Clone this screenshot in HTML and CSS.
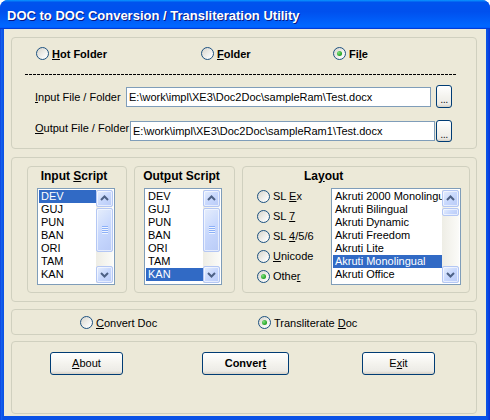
FILE: index.html
```html
<!DOCTYPE html>
<html lang="en">
  <head>
    <meta charset="UTF-8" />
    <title>DOC to DOC Conversion / Transliteration Utility</title>
    <link rel="stylesheet" href="styles.css">
  </head>
  <body>
    <div class="window">
      <div class="titlebar">DOC to DOC Conversion / Transliteration Utility</div>
      <div class="client">
        <div class="group source">
          <div class="mode-row">
            <div class="option hot"><span class="radio"></span><b><u>H</u>ot Folder</b></div>
            <div class="option folder"><span class="radio"></span><b><u>F</u>older</b></div>
            <div class="option"><span class="radio checked"></span><b>Fi<u>l</u>e</b></div>
          </div>
          <div class="dashes"></div>
          <div class="path-row input">
            <span class="path-label"><u>I</u>nput File / Folder</span>
            <div class="textbox">E:\work\impl\XE3\Doc2Doc\sampleRam\Test.docx</div>
            <div class="btn browse">...</div>
          </div>
          <div class="path-row output">
            <span class="path-label"><u>O</u>utput File / Folder</span>
            <div class="textbox">E:\work\impl\XE3\Doc2Doc\sampleRam1\Test.docx</div>
            <div class="btn browse">...</div>
          </div>
        </div>

        <div class="group scripts">
          <div class="subgroup script input-script">
            <div class="subtitle">Input <u>S</u>cript</div>
            <div class="listbox">
              <ul class="items">
                <li class="sel">DEV</li>
                <li>GUJ</li>
                <li>PUN</li>
                <li>BAN</li>
                <li>ORI</li>
                <li>TAM</li>
                <li>KAN</li>
              </ul>
              <div class="scrollbar">
                <div class="sb-btn"><svg width="15" height="15" viewBox="0 0 15 15"><path d="M4 9 L7.5 5.5 L11 9" /></svg></div>
                <div class="sb-track"><div class="sb-thumb tall"><span class="grip"></span></div></div>
                <div class="sb-btn"><svg width="15" height="15" viewBox="0 0 15 15"><path d="M4 6 L7.5 9.5 L11 6" /></svg></div>
              </div>
            </div>
          </div>
          <div class="subgroup script output-script">
            <div class="subtitle">Out<u>p</u>ut Script</div>
            <div class="listbox">
              <ul class="items">
                <li>DEV</li>
                <li>GUJ</li>
                <li>PUN</li>
                <li>BAN</li>
                <li>ORI</li>
                <li>TAM</li>
                <li class="sel">KAN</li>
              </ul>
              <div class="scrollbar">
                <div class="sb-btn"><svg width="15" height="15" viewBox="0 0 15 15"><path d="M4 9 L7.5 5.5 L11 9" /></svg></div>
                <div class="sb-track"><div class="sb-thumb tall"><span class="grip"></span></div></div>
                <div class="sb-btn"><svg width="15" height="15" viewBox="0 0 15 15"><path d="M4 6 L7.5 9.5 L11 6" /></svg></div>
              </div>
            </div>
          </div>
          <div class="subgroup layout">
            <div class="subtitle">La<u>y</u>out</div>
            <div class="layout-body">
              <div class="radio-col">
                <div class="option"><span class="radio"></span><span>SL <u>E</u>x</span></div>
                <div class="option"><span class="radio"></span><span>SL <u>7</u></span></div>
                <div class="option"><span class="radio"></span><span>SL <u>4</u>/5/6</span></div>
                <div class="option"><span class="radio"></span><span><u>U</u>nicode</span></div>
                <div class="option"><span class="radio checked"></span><span>Othe<u>r</u></span></div>
              </div>
              <div class="listbox wide">
                <ul class="items">
                  <li>Akruti 2000 Monolingual</li>
                  <li>Akruti Bilingual</li>
                  <li>Akruti Dynamic</li>
                  <li>Akruti Freedom</li>
                  <li>Akruti Lite</li>
                  <li class="sel">Akruti Monolingual</li>
                  <li>Akruti Office</li>
                </ul>
                <div class="scrollbar">
                  <div class="sb-btn"><svg width="15" height="15" viewBox="0 0 15 15"><path d="M4 9 L7.5 5.5 L11 9" /></svg></div>
                  <div class="sb-track"><div class="sb-thumb small"></div></div>
                  <div class="sb-btn"><svg width="15" height="15" viewBox="0 0 15 15"><path d="M4 6 L7.5 9.5 L11 6" /></svg></div>
                </div>
              </div>
            </div>
          </div>
        </div>

        <div class="group action">
          <div class="option convert-doc"><span class="radio"></span><span><u>C</u>onvert Doc</span></div>
          <div class="option"><span class="radio checked"></span><span>Transliterate <u>D</u>oc</span></div>
        </div>

        <div class="group buttons">
          <div class="btn push about"><u>A</u>bout</div>
          <div class="btn push convert">Conver<u>t</u></div>
          <div class="btn push exit">E<u>x</u>it</div>
        </div>
      </div>
    </div>
  </body>
</html>
```

FILE: styles.css
```css
body {
  margin: 0px;
  background-color: rgb(255, 255, 255);
  font-family: 'Liberation Sans', Arial, sans-serif;
  font-size: 11px;
  color: rgb(0, 0, 0);
}

u {
  text-decoration-thickness: 1px;
  text-underline-offset: 1px;
}

.window {
  width: 490px;
  height: 420px;
  box-sizing: border-box;
  display: flex;
  flex-direction: column;
  border-radius: 8px 8px 0px 0px;
  overflow: hidden;
  background: linear-gradient(90deg, #0831d9 0px, #1664ee 1px, #0a52e6 3px, #0a52e6 calc(100% - 3px), #0831d9 100%);
}

.titlebar {
  flex: none;
  height: 29px;
  padding-left: 7px;
  line-height: 31px;
  color: white;
  font-weight: bold;
  font-size: 13px;
  text-shadow: 1px 1px #0a1883;
  background: linear-gradient(#0997ff, #0053ee 8%, #0050ee 40%, #0066ff 88%, #0066ff 93%, #005bff 95%, #003dd7 96%, #003dd7);
}

.client {
  flex: 1;
  margin: 0px 4px 4px;
  padding: 8px 0px 0px 7px;
  background-color: #ece9d8;
}

.group,
.subgroup {
  box-sizing: border-box;
  border: 1px solid #d0d0bf;
  border-radius: 4px;
}

.group {
  width: 466px;
}

/* radios */

.option {
  display: flex;
  align-items: center;
  gap: 3px;
  white-space: nowrap;
}

.radio {
  flex: none;
  width: 13px;
  height: 13px;
  box-sizing: border-box;
  border: 1px solid #1c5180;
  border-radius: 50%;
  background: linear-gradient(135deg, #d7d5cc, #f6f6f4 70%, #ffffff);
  display: grid;
  place-items: center;
}

.radio.checked::after {
  content: '';
  width: 5px;
  height: 5px;
  border-radius: 50%;
  background: radial-gradient(circle at 35% 35%, #7fe07f, #21a121 70%);
}

/* top group */

.source {
  height: 112px;
}

.mode-row {
  display: flex;
  height: 15px;
  padding: 8px 0px 0px 24px;
}

.mode-row .hot {
  width: 165px;
}

.mode-row .folder {
  width: 132px;
}

.dashes {
  width: 431px;
  height: 1px;
  margin: 13px 0px 0px 13px;
  background: repeating-linear-gradient(90deg, #000 0px 3px, transparent 3px 4px);
}

.path-row {
  display: flex;
  align-items: center;
  padding-left: 23px;
  height: 23px;
  margin-top: 10px;
}

.path-label {
  flex: none;
  line-height: 14px;
}

.input .path-label {
  width: 91px;
}

.output {
  margin-top: 12px;
  height: 22px;
}

.output .path-label {
  width: 95px;
  align-self: flex-start;
  margin-top: 1px;
}

.textbox {
  flex: none;
  width: 305px;
  height: 20px;
  box-sizing: border-box;
  border: 1px solid #7f9db9;
  background-color: white;
  padding-left: 2px;
  line-height: 18px;
  white-space: nowrap;
  overflow: hidden;
}

.btn {
  box-sizing: border-box;
  border: 1px solid #003c74;
  border-radius: 3px;
  background: linear-gradient(#ffffff, #f4f3ee 50%, #ecebe6 86%, #d6d0c5);
  text-align: center;
}

.browse {
  flex: none;
  width: 16px;
  height: 23px;
  margin-left: 5px;
  line-height: 27px;
  letter-spacing: -0.5px;
  color: #222;
}

.output .browse {
  height: 22px;
  margin-left: 1px;
  line-height: 26px;
}

/* scripts group */

.scripts {
  height: 145px;
  margin-top: 8px;
  display: flex;
  gap: 7px;
  padding: 8px 0px 0px 15px;
}

.subgroup {
  height: 127px;
}

.input-script {
  width: 100px;
}

.output-script {
  width: 101px;
}

.subtitle {
  font-weight: bold;
  font-size: 12px;
  line-height: 15px;
  padding: 2px 6px 0px 0px;
  text-align: center;
}

.layout {
  width: 228px;
}

.layout .subtitle {
  text-align: left;
  padding-left: 61px;
}

.listbox {
  width: 78px;
  height: 97px;
  box-sizing: border-box;
  margin: 4px 0px 0px 9px;
  border: 1px solid #7f9db9;
  padding: 1px;
  background-color: white;
  display: flex;
}

.items {
  flex: 1;
  min-width: 0px;
  list-style: none;
  margin: 0px;
  padding: 0px;
  overflow: hidden;
}

.items li {
  height: 13px;
  line-height: 13px;
  padding-left: 2px;
  white-space: nowrap;
}

.items li.sel {
  background-color: #316ac5;
  color: white;
}

.scrollbar {
  flex: none;
  width: 17px;
  display: flex;
  flex-direction: column;
  background: linear-gradient(90deg, #eeede5, #fbfbf8);
}

.sb-btn,
.sb-thumb {
  box-sizing: border-box;
  border: 1px solid #b4c7f4;
  border-radius: 2px;
  background: linear-gradient(135deg, #e6eefc, #c8d8fd 50%, #b9cbf7);
  box-shadow: inset 0px 0px 0px 1px rgba(255, 255, 255, 0.6);
}

.sb-btn {
  height: 17px;
  display: grid;
  place-items: center;
}

.sb-btn path {
  fill: none;
  stroke: #4d6185;
  stroke-width: 2;
}

.sb-track {
  flex: 1;
  padding-top: 1px;
}

.sb-thumb {
  display: grid;
  place-items: center;
}

.sb-thumb.tall {
  height: 44px;
}

.sb-thumb.small {
  height: 8px;
}

.grip {
  width: 6px;
  height: 8px;
  background: repeating-linear-gradient(#8cb0f8 0px 1px, #eef4fe 1px 2px);
}

.layout-body {
  display: flex;
  align-items: flex-start;
  margin-top: 4px;
  padding-left: 14px;
}

.radio-col {
  width: 74px;
  margin-top: -2px;
}

.radio-col .option {
  height: 20px;
}

.listbox.wide {
  width: 130px;
  margin: 0px;
}

/* action group */

.action {
  height: 26px;
  margin-top: 7px;
  display: flex;
  align-items: center;
  padding: 1px 0px 0px 68px;
}

.convert-doc {
  width: 178px;
}

/* buttons group */

.buttons {
  height: 73px;
  margin-top: 6px;
  display: flex;
  align-items: flex-start;
  padding: 10px 0px 0px 38px;
}

.push {
  height: 23px;
  line-height: 21px;
}

.about {
  width: 73px;
}

.convert {
  width: 87px;
  margin-left: 79px;
  font-weight: bold;
}

.exit {
  width: 73px;
  margin-left: 73px;
}
```
